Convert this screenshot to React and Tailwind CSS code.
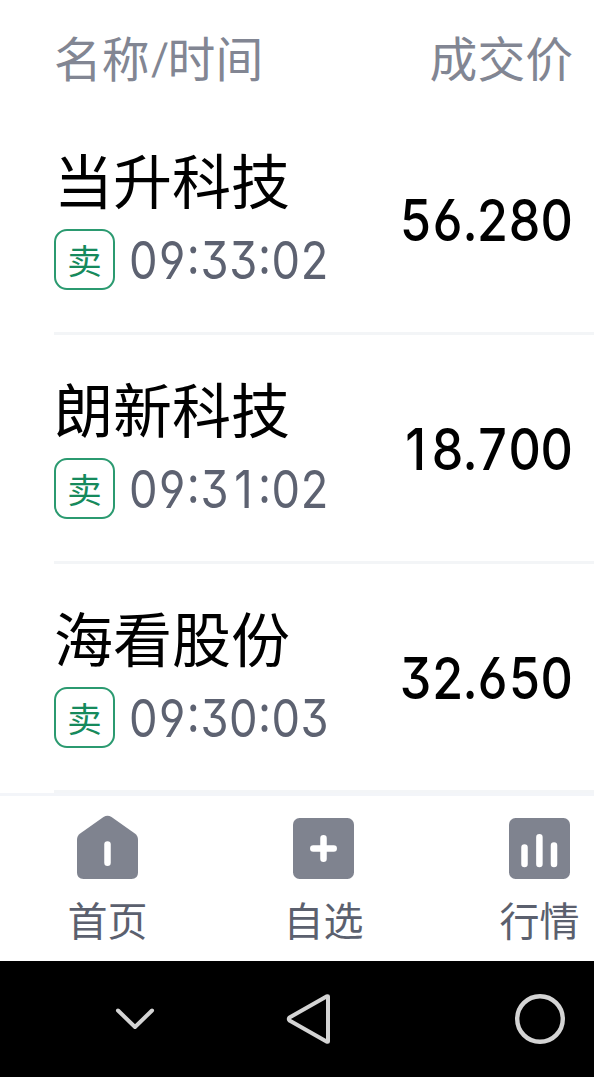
import React from "react";

const trades = [
  { name: "当升科技", time: "09:33:02", price: "56.280" },
  { name: "朗新科技", time: "09:31:02", price: "18.700" },
  { name: "海看股份", time: "09:30:03", price: "32.650" },
];

const HomeIcon = () => (
  <svg width="61" height="64" viewBox="0 0 61 64">
    <path
      d="M26.500 2Q30.500 -.3 34.500 2L57.500 18.300Q61 20.800 61 24.500V57.500Q61 64 54.500 64H6.500Q0 64 0 57.500V24.500Q0 20.800 3.500 18.300Z"
      fill="#7f838f"
    />
    <path d="M30.500 29.600V47.800" stroke="#fff" strokeWidth="6.500" strokeLinecap="round" />
  </svg>
);

const AddIcon = () => (
  <svg width="61" height="64" viewBox="0 0 61 64">
    <rect y="3" width="61" height="61" rx="6.500" fill="#7f838f" />
    <path
      d="M30.500 23.300V43.700M20.300 33.500H40.700"
      stroke="#fff"
      strokeWidth="6.500"
      strokeLinecap="round"
    />
  </svg>
);

const MarketIcon = () => (
  <svg width="61" height="64" viewBox="0 0 61 64">
    <rect y="3" width="61" height="61" rx="6.500" fill="#7f838f" />
    <path
      d="M15.500 32.500V49M30.400 22.200V49M45 30.400V49"
      stroke="#fff"
      strokeWidth="6.500"
      strokeLinecap="round"
    />
  </svg>
);

const tabs = [
  { label: "首页", icon: HomeIcon },
  { label: "自选", icon: AddIcon },
  { label: "行情", icon: MarketIcon },
];

// Every digit gets the same cell so that the columns line up
const Digits = ({ value, digitClass, markClass }) =>
  value.split("").map((char, index) => (
    <span
      key={index}
      className={`flex shrink-0 justify-center ${/\d/.test(char) ? digitClass : markClass}`}
    >
      {char}
    </span>
  ));

const TradeRow = ({ trade }) => (
  <div className="ml-[54px] flex h-[229px] items-start justify-between border-b-[3px] border-[#f3f5f7] pr-[21px]">
    <div className="pt-[38px]">
      <div className="h-[84px] text-[59px] leading-[70px] text-black">{trade.name}</div>
      <div className="flex items-center">
        <span className="flex size-[61px] items-center justify-center rounded-[13px] border-2 border-[#2b9a70] text-[34.5px] leading-none text-[#168a5c]">
          卖
        </span>
        <span className="ml-[14px] flex w-[200px] origin-left scale-x-[0.870] pt-[2px] font-['Inter'] text-[52px] leading-[61px] text-[#5d6271] [font-feature-settings:'ss01','cv03','cv04','case']">
          <Digits value={trade.time} digitClass="w-[33.1px]" markClass="w-[15.6px]" />
        </span>
      </div>
    </div>
    <div className="flex origin-right scale-x-[0.880] pt-[80px] font-['Inter'] text-[57px] leading-[70px] font-medium text-black [font-feature-settings:'ss01','cv03','cv04']">
      <Digits value={trade.price} digitClass="w-[36.4px]" markClass="w-[14.7px]" />
    </div>
  </div>
);

const App = () => {
  return (
    <div className="flex h-[1077px] w-[594px] flex-col overflow-hidden bg-white font-['Noto_Sans_CJK_SC',sans-serif]">
      {/* Table header */}
      <div className="flex h-[106px] shrink-0 justify-between pt-[24px] pr-[21px] pl-[54px] text-[47.8px] leading-[66px] text-[#828693]">
        <div className="flex">
          <span>名称</span>
          <span className="flex w-[18px] -skew-x-6 justify-center font-['Inter'] text-[40px] leading-[69px]">/</span>
          <span>时间</span>
        </div>
        <span>成交价</span>
      </div>

      {trades.map((trade) => (
        <TradeRow key={trade.name} trade={trade} />
      ))}

      {/* Bottom tabs */}
      <nav className="flex h-[168px] shrink-0 border-t-[3px] border-[#f3f5f9]">
        {tabs.map(({ label, icon: Icon }) => (
          <div key={label} className="flex w-[216px] shrink-0 flex-col items-center pt-[19px] pr-px">
            <Icon />
            <span className="mt-[11px] text-[40px] leading-[58px] text-[#5b606e]">{label}</span>
          </div>
        ))}
      </nav>

      {/* System navigation */}
      <div className="flex h-[116px] shrink-0 items-center bg-black pl-[115px]">
        <svg width="40" height="24" viewBox="0 0 40 24" fill="none">
          <path d="M3 3.500L20 20L37 3.500" stroke="#d4d4d4" strokeWidth="4" strokeLinecap="round" strokeLinejoin="round" />
        </svg>
        <svg className="ml-[130px]" width="48" height="52" viewBox="0 0 48 52" fill="none">
          <path d="M43 3.500V48.500Q43 49 41.500 48.500L4.500 27.500Q3 26 4.500 24.500L41.500 3.500Q43 3 43 3.500Z" stroke="#d4d4d4" strokeWidth="4" strokeLinejoin="round" />
        </svg>
        <svg className="ml-[181px] shrink-0" width="52" height="52" viewBox="0 0 52 52" fill="none">
          <circle cx="26" cy="26" r="22.800" stroke="#d4d4d4" strokeWidth="4.400" />
        </svg>
      </div>
    </div>
  );
};

export default App;
